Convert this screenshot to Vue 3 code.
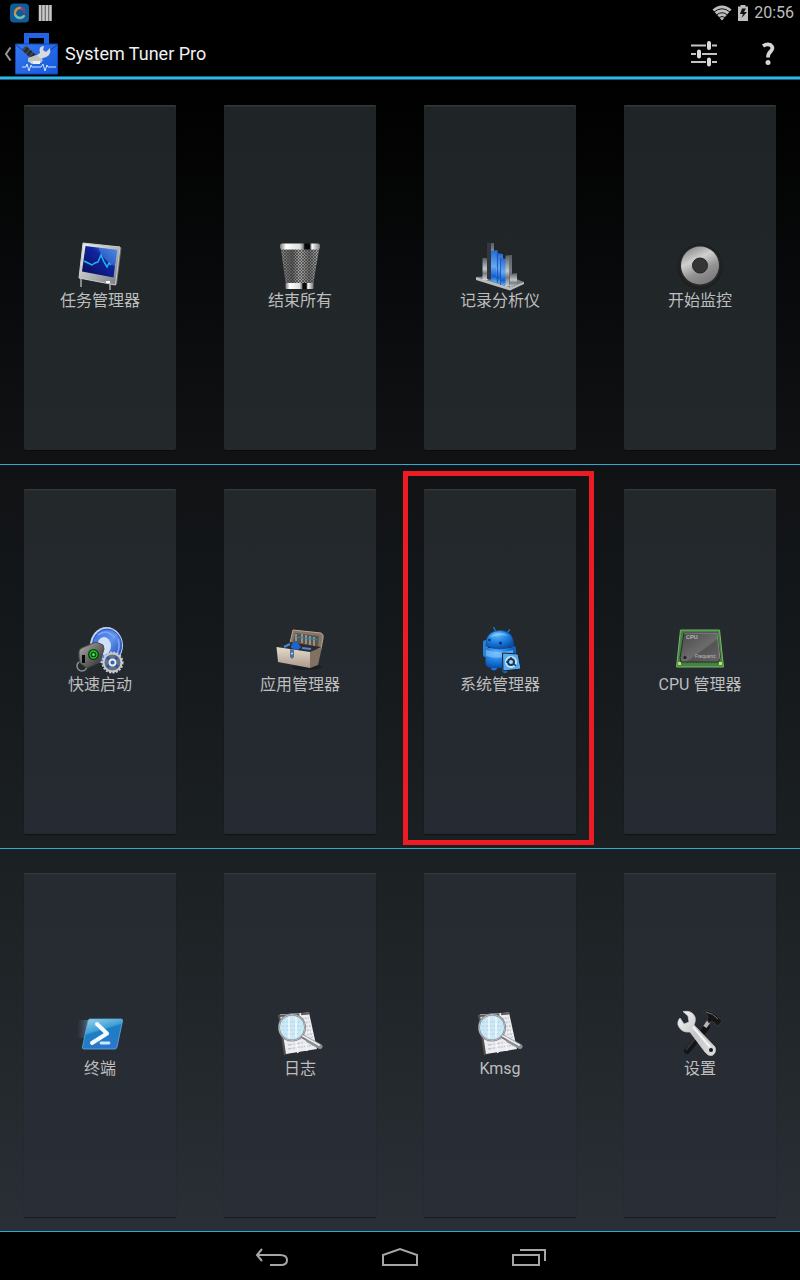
<script setup>
// rows of launcher tiles
const rows = [
  [
    { icon: 'monitor', label: '任务管理器' },
    { icon: 'trash', label: '结束所有' },
    { icon: 'chart', label: '记录分析仪' },
    { icon: 'record', label: '开始监控' }
  ],
  [
    { icon: 'launch', label: '快速启动' },
    { icon: 'toolbox', label: '应用管理器' },
    { icon: 'android', label: '系统管理器', marked: true },
    { icon: 'cpu', label: 'CPU 管理器' }
  ],
  [
    { icon: 'terminal', label: '终端' },
    { icon: 'log', label: '日志' },
    { icon: 'log', label: 'Kmsg' },
    { icon: 'tools', label: '设置' }
  ]
];
</script>

<template>
  <div class="screen">
    <!-- shared gradients for the icons -->
    <svg class="defs" aria-hidden="true">
      <defs>
        <linearGradient id="silver" x1="0" y1="0" x2="1" y2="1">
          <stop offset="0" stop-color="#f4f4f4" /><stop offset="1" stop-color="#777b7d" />
        </linearGradient>
        <linearGradient id="wrench" x1="0" y1="0" x2="1" y2="1">
          <stop offset="0" stop-color="#f8f8f8" /><stop offset="0.5" stop-color="#c4c6c7" />
          <stop offset="1" stop-color="#dcdcdc" />
        </linearGradient>
        <linearGradient id="chrome">
          <stop offset="0" stop-color="#777" /><stop offset="0.15" stop-color="#fff" />
          <stop offset="0.5" stop-color="#ddd" /><stop offset="0.58" stop-color="#888" />
          <stop offset="0.62" stop-color="#080808" /><stop offset="0.74" stop-color="#080808" />
          <stop offset="0.8" stop-color="#fff" /><stop offset="1" stop-color="#777" />
        </linearGradient>
        <linearGradient id="bin">
          <stop offset="0" stop-color="#8a8a8a" /><stop offset="0.3" stop-color="#5c5c5c" />
          <stop offset="0.5" stop-color="#a8a8a8" /><stop offset="0.75" stop-color="#6c6c6c" />
          <stop offset="1" stop-color="#aaa" />
        </linearGradient>
        <pattern id="mesh" width="3" height="3" patternUnits="userSpaceOnUse">
          <path d="M0 0L3 3M3 0L0 3" stroke="#333" stroke-width="0.6" />
        </pattern>
        <linearGradient id="lcd" x1="0" y1="1" x2="1" y2="0">
          <stop offset="0" stop-color="#080a55" /><stop offset="0.6" stop-color="#1024a0" />
          <stop offset="1" stop-color="#4a90e8" />
        </linearGradient>
        <linearGradient id="bar" x1="0" y1="0" x2="0" y2="1">
          <stop offset="0" stop-color="#2169d0" /><stop offset="0.5" stop-color="#68a8f4" />
          <stop offset="0.8" stop-color="#1260cc" /><stop offset="1" stop-color="#6eb4f0" />
        </linearGradient>
        <linearGradient id="steel" x1="0" y1="0" x2="0" y2="1">
          <stop offset="0" stop-color="#565c62" /><stop offset="0.5" stop-color="#c3c8cc" />
          <stop offset="0.7" stop-color="#777d82" /><stop offset="1" stop-color="#d5d8da" />
        </linearGradient>
        <linearGradient id="disc" x1="0.2" y1="0" x2="0.7" y2="1">
          <stop offset="0" stop-color="#858585" /><stop offset="0.35" stop-color="#d0d0d0" />
          <stop offset="0.65" stop-color="#939393" /><stop offset="1" stop-color="#777" />
        </linearGradient>
        <radialGradient id="droid" cx="0.4" cy="0.25" r="0.8">
          <stop offset="0" stop-color="#5db8ff" /><stop offset="0.5" stop-color="#1c7fe0" />
          <stop offset="1" stop-color="#0746a0" />
        </radialGradient>
        <linearGradient id="wheel" x1="0" y1="0" x2="1" y2="1">
          <stop offset="0" stop-color="#3b6be0" /><stop offset="0.5" stop-color="#5f94ec" />
          <stop offset="1" stop-color="#1434a4" />
        </linearGradient>
        <linearGradient id="fob" x1="0" y1="0" x2="1" y2="1">
          <stop offset="0" stop-color="#b2b2b0" /><stop offset="0.5" stop-color="#6b6c6a" />
          <stop offset="1" stop-color="#222" />
        </linearGradient>
        <linearGradient id="wood" x1="0" y1="0" x2="0" y2="1">
          <stop offset="0" stop-color="#e4dccf" /><stop offset="1" stop-color="#aa9a89" />
        </linearGradient>
        <linearGradient id="chip" x1="0" y1="0" x2="1" y2="1">
          <stop offset="0" stop-color="#484848" /><stop offset="0.55" stop-color="#6c6c6c" />
          <stop offset="0.6" stop-color="#545454" /><stop offset="1" stop-color="#666" />
        </linearGradient>
        <linearGradient id="shell" x1="0" y1="0" x2="0.4" y2="1">
          <stop offset="0" stop-color="#a2d8ee" /><stop offset="0.45" stop-color="#3f9fd4" />
          <stop offset="0.5" stop-color="#1c7fc4" /><stop offset="1" stop-color="#2b76cc" />
        </linearGradient>
        <linearGradient id="speed">
          <stop offset="0" stop-color="#67a" stop-opacity="0" /><stop offset="1" stop-color="#9cc4d8" />
        </linearGradient>
        <linearGradient id="bag" x1="0" y1="0" x2="1" y2="1">
          <stop offset="0" stop-color="#3578f2" /><stop offset="1" stop-color="#1658dc" />
        </linearGradient>
        <linearGradient id="swirl" x1="0" y1="0" x2="1" y2="1">
          <stop offset="0" stop-color="#f09a38" /><stop offset="0.5" stop-color="#9a4a90" />
          <stop offset="1" stop-color="#48d0c0" />
        </linearGradient>
      </defs>
    </svg>

    <div class="status-bar">
      <svg class="status-left" viewBox="0 0 44 20">
        <rect y="0.5" width="19" height="19" rx="4" fill="#0b5e99" />
        <path d="M13 6A5 5 0 1 0 14 13" fill="none" stroke="#e08a3c" stroke-width="2.500" stroke-linecap="round" />
        <path d="M11 4.500Q15 6 14 10" fill="none" stroke="#7a3f86" stroke-width="2.500" />
        <path d="M5 12Q8 17 14 13" fill="none" stroke="#55c9c8" stroke-width="2" />
        <path d="M29 2h12v16H29z" fill="#555" />
        <path d="M30 2v16M33.500 2v16M37 2v16M40.500 2v16" stroke="#c8c8c8" stroke-width="2.500" />
      </svg>
      <div class="status-right">
        <svg class="wifi" viewBox="0 0 20 16">
          <path d="M0.500 4.500Q10-3.500 19.500 4.500L10 15.500z" fill="#bebebe" />
          <path d="M2 7Q10 0.500 18 7M4.500 10Q10 5.500 15.500 10M7 12.500Q10 10.500 13 12.500" fill="none" stroke="#111" stroke-width="1" />
        </svg>
        <svg class="battery" viewBox="0 0 12 16">
          <path d="M1 1.500h2.500V0h5v1.500H11V16H1z" fill="#bebebe" />
          <path d="M5 3.500h4L7 7h3l-5.500 6L6 9H3z" fill="#111" />
        </svg>
        <span class="clock">20:56</span>
      </div>
    </div>

    <header class="action-bar">
      <button class="home-btn" aria-label="Navigate up">
        <svg class="caret" viewBox="0 0 8 14"><path d="M6.500 0.500L2 7L6.500 13.500" fill="none" stroke="#999" stroke-width="2" /></svg>
        <svg class="logo" viewBox="0 0 43 42">
          <path d="M9 0h25v11h-5V5H14v6H9z" fill="#2164e4" />
          <path d="M0.500 11h42v30h-42z" fill="url(#bag)" stroke="#1148b8" />
          <path d="M1 12L18 25H25L42 12" fill="none" stroke="#103e9c" />
          <path d="M9 15l12 11" stroke="#292c30" stroke-width="6" />
          <path d="M8 18l4-5M11 21l4-5M14 24l4-5" stroke="#777" stroke-width="0.600" />
          <path d="M13 28L25 20Q23 13 29 13L28 17L31 19L35 15Q37 23 28 25L17 31z" fill="#d8dadb" />
          <path d="M13 25l8-3 7 5-2 3h-8v-2l-5 1z" fill="#bfc2c4" />
          <path d="M18 28h7v3h-7z" fill="#eee" />
          <path d="M7 34H11L12 31L14 38L16 32L17 34H26L28 31L30 38L32 32L33 34H41" fill="none" stroke="#cfe3ff" stroke-width="1" />
        </svg>
      </button>
      <h1 class="title">System Tuner Pro</h1>
      <div class="actions">
        <button class="action-btn" aria-label="Tuning">
          <svg viewBox="0 0 28 28">
            <path d="M1 5.500h26M1 14h26M1 22h26" stroke="#c4c4c4" stroke-width="2" />
            <path d="M19 3v5M9 11.500v5M19 19.500v5" stroke="#050505" stroke-width="6" stroke-linecap="round" />
            <path d="M19 3v5M9 11.500v5M19 19.500v5" stroke="#dcdcdc" stroke-width="4" stroke-linecap="round" />
          </svg>
        </button>
        <button class="action-btn" aria-label="Help">
          <svg viewBox="0 0 28 28">
            <path d="M9 6Q13 3.500 16.500 5Q20 7.500 17 11Q14 13.500 14 17.500" fill="none" stroke="#d6d6d6" stroke-width="3.800" />
            <circle cx="14" cy="22.500" r="2.500" fill="#d6d6d6" />
          </svg>
        </button>
      </div>
    </header>

    <main class="grid">
      <div v-for="(row, r) in rows" :key="r" class="row">
        <div v-for="item in row" :key="item.label" class="cell" :class="{ marked: item.marked }">
          <button class="tile">
            <svg class="icon" viewBox="0 0 48 48">
              <g v-if="item.icon === 'monitor'">
                <path d="M5 37v8M34 41v7" stroke="#85898b" stroke-width="2" />
                <path d="M42 4L45.500 6L41 42L39 43z" fill="#686d70" />
                <path d="M7 1L44 5L39.500 43L3 36z" fill="url(#silver)" stroke="#c9cdd0" />
                <path d="M9.500 4L41 8L37.500 35.500L6 29.500z" fill="url(#lcd)" />
                <path d="M22 5.500L41 8L39 24Q28 20 22 5.500z" fill="#4b92ec" opacity="0.5" />
                <path d="M8 19L12 21L16 23L19 21L22 20L25 13L28 20L31 25L33 21L35 23" fill="none" stroke="#20b8e8" stroke-width="1.500" />
                <path d="M30 39h4v2h-4z" fill="#fff" />
              </g>
              <g v-else-if="item.icon === 'trash'">
                <path d="M5 7L10 43H37L43 7z" fill="url(#bin)" />
                <path d="M5 7L10 43H37L43 7z" fill="url(#mesh)" />
                <rect x="4" y="1.500" width="40" height="6" rx="2" fill="url(#chrome)" />
                <rect x="9.500" y="41" width="28" height="6" rx="1" fill="url(#chrome)" />
              </g>
              <g v-else-if="item.icon === 'chart'">
                <path d="M0 35L30 33L48 40L34 48z" fill="#777c80" />
                <path d="M0 35L34 45.500L48 40V42L34 48.500L0 38z" fill="#b9bdc0" />
                <path d="M6.500 16H12V38H6.500z" fill="url(#steel)" />
                <path d="M11 0.500L17 1V38L11 37z" fill="#32373f" />
                <path d="M15 1H18V38H15z" fill="url(#steel)" />
                <path d="M15 9L21.500 8V41L15 39z" fill="url(#bar)" />
                <path d="M20 11L27 12V42L20 41z" fill="url(#bar)" />
                <path d="M21.500 12V41M24.500 16V43" stroke="#1453ae" stroke-width="0.800" />
                <path d="M25 16L30 17V44L25 43z" fill="url(#bar)" />
                <path d="M29.500 13.500L36 13V43L29.500 45z" fill="url(#steel)" />
                <path d="M33 14H36V43H33z" fill="#5b6066" opacity="0.7" />
                <path d="M34 32L41 31V42L34 45z" fill="url(#steel)" />
              </g>
              <g v-else-if="item.icon === 'record'">
                <circle cx="24" cy="24.500" r="23" fill="#1e2021" />
                <circle cx="24" cy="24" r="20.500" fill="#292929" />
                <circle cx="24" cy="23.500" r="19" fill="url(#disc)" />
                <circle cx="24" cy="23.500" r="7.500" fill="#353535" stroke="#222" />
              </g>
              <g v-else-if="item.icon === 'launch'">
                <ellipse cx="30.500" cy="19.500" rx="16.500" ry="18.500" fill="#c4d4f3" />
                <ellipse cx="31" cy="19.500" rx="14.500" ry="16.500" fill="url(#wheel)" stroke="#2450c0" />
                <path d="M22 9Q31 2 39 12M36 33Q46 25 42 13" fill="none" stroke="#7fa4f0" stroke-width="1.500" />
                <ellipse cx="28" cy="20" rx="7" ry="9" fill="#cfe0f8" />
                <circle cx="6" cy="40" r="5" fill="none" stroke="#8c9090" stroke-width="1.500" />
                <path d="M3 25Q4 22 8 21L20 16L27 19L28 23L24 36L11 42L4 37L3 31z" fill="url(#fob)" stroke="#474847" />
                <path d="M6 29h3v8H6z" fill="#090909" />
                <circle cx="17.500" cy="28.500" r="5.500" fill="#173818" />
                <circle cx="17.500" cy="28.500" r="3.500" fill="#173818" stroke="#18cf22" stroke-width="1.300" />
                <circle cx="17.500" cy="28.500" r="1.500" fill="#36f044" />
                <circle cx="36.500" cy="36.500" r="9" fill="#687079" stroke="#c8cdd3" stroke-width="2" />
                <circle cx="36.500" cy="36.500" r="10.300" fill="none" stroke="#c8cdd3" stroke-width="1.500" stroke-dasharray="2 1.500" />
                <path d="M31 31l3 3M41 31l-2 3M31 41l3-2M42 41l-3-2" stroke="#2a55b0" stroke-width="3" />
                <circle cx="36.500" cy="36.500" r="3" fill="#3465bf" stroke="#e6ebef" stroke-width="1.800" />
              </g>
              <g v-else-if="item.icon === 'toolbox'">
                <ellipse cx="31" cy="41" rx="15" ry="3" fill="#15191d" opacity="0.6" />
                <path d="M17 4L45 7Q48 8 47 12L45 23L14 17z" fill="#857668" stroke="#b7a995" />
                <path d="M19 7L43 10L42 21L17 16z" fill="#5b544d" />
                <path d="M20 8V15M26 8V17M30 9V18M34 10V19M38 11V20" stroke="#b6b9b9" stroke-width="1.200" />
                <path d="M20 11L42 14" stroke="#268bb2" />
                <path d="M0.500 21L14 16L45 21L34 27z" fill="#302a28" />
                <path d="M15 22Q15 15 21 16L25 21L22 24z" fill="#1667d5" />
                <path d="M8 21L14 18M26 22L35 23" stroke="#4589dd" stroke-width="2" />
                <path d="M0.500 21L34 26V42L2 36z" fill="url(#wood)" />
                <path d="M34 26L46 21L42 39L34 42z" fill="#817163" />
                <path d="M14 23L18 24V31L16 33L14 31z" fill="#526e9b" />
                <circle cx="16" cy="27.500" r="1" fill="#c9d2df" />
              </g>
              <g v-else-if="item.icon === 'android'">
                <path d="M17.500 1L20 6M34 3.500L31 7" stroke="#2279c8" stroke-width="1.300" />
                <rect x="7" y="14" width="5" height="17" rx="2.500" fill="#2c83d2" />
                <rect x="35" y="20" width="5" height="14" rx="2.500" fill="#1660b8" />
                <path d="M15 38h6v5q-3 3-6 0zM26 38h6v7q-3 4-6 0z" fill="#1a75d0" />
                <path d="M9.500 22H37V38Q36 42 31 42H16Q10 42 9.500 37z" fill="url(#droid)" />
                <path d="M10 24Q23 28 37 24V29Q23 34 10 30z" fill="#8cc8fa" opacity="0.6" />
                <path d="M10 20Q9 5 24 4.500Q38 5 37.500 20Q24 26 10 20z" fill="url(#droid)" stroke="#0f4fa0" stroke-width="0.700" />
                <path d="M14 11Q22 3 33 10Q27 8 14 11z" fill="#a7dcff" opacity="0.5" />
                <circle cx="13.500" cy="14" r="1.300" fill="#083070" /><circle cx="24.500" cy="17" r="1.500" fill="#083070" />
                <path d="M26.500 27L42 28L45 43L27 45z" fill="#55abf2" stroke="#191f26" />
                <circle cx="35" cy="36" r="6" fill="#c4e2f9" />
                <circle cx="35" cy="36" r="3" fill="#acd4f4" stroke="#17395d" stroke-width="2" />
                <path d="M35 31v2M30 36h2M38 38l2 2" stroke="#17395d" stroke-width="1.500" />
              </g>
              <g v-else-if="item.icon === 'cpu'">
                <path d="M4.500 4H43.500L47.500 41H0.500z" fill="#44863f" stroke="#7ab36e" stroke-width="1" />
                <path d="M5 8H43M2 37H46" stroke="#316d2d" stroke-dasharray="1 2" />
                <path d="M8 6.500H41L44.500 32L42 36H5L4 32z" fill="url(#chip)" stroke="#292b2a" />
                <path d="M8 7L41 7L44 33" fill="none" stroke="#999" stroke-width="0.800" />
                <circle cx="9" cy="31.500" r="1.500" fill="#1c1c1c" />
                <path d="M2 36h3v3H2zM43 36h3v3h-3z" fill="#c9dd64" />
                <text x="10" y="13" class="chip-name">CPU</text>
                <text x="19" y="32" class="chip-sub">Frequenz</text>
              </g>
              <g v-else-if="item.icon === 'terminal'">
                <path d="M3 10H14L9 28H1z" fill="url(#speed)" opacity="0.5" />
                <path d="M14 9H45Q47 9 46.500 11L41 37Q40.500 39 39 39H8Q6 39 6.500 37L12 11Q12.500 9 14 9z" fill="url(#shell)" stroke="#57b0dd" stroke-width="0.800" />
                <path d="M21 14L31 23.500L16 33" fill="none" stroke="#f3fbff" stroke-width="4" stroke-linecap="round" stroke-linejoin="round" />
                <path d="M25 33H33" stroke="#c5e9ff" stroke-width="2.800" stroke-linecap="round" />
              </g>
              <g v-else-if="item.icon === 'log'">
                <path d="M2 5L6 4L12 44L8 45z" fill="#55504c" />
                <path d="M4 4.500L33 2.500L41 39L10 44z" fill="#ededf0" />
                <path d="M3 5L33 2.500V4.500L4 7z" fill="#5e5b58" />
                <path d="M8 11L33 8M9 15L34 12M9 19L35 16M10 23L35 20M10 27L36 24M11 31L37 27M12 35L37 31M12 39L38 35" stroke="#c3c5d8" stroke-width="1.300" stroke-dasharray="4 1 2 1" />
                <path d="M15 4L22 43M24 3L31 41" stroke="#f5f5f6" stroke-width="1.500" />
                <circle cx="16" cy="17.500" r="13" fill="#cbe9f7" stroke="#777f85" stroke-width="2" />
                <circle cx="16" cy="17.500" r="13" fill="none" stroke="#c8ced2" stroke-width="0.800" />
                <path d="M6 12h18M5 16h22M6 20h20M8 24h15" stroke="#b4d2e6" stroke-dasharray="3 1" />
                <path d="M13 7v21M20 7v20" stroke="#fff" stroke-width="2" opacity="0.6" />
                <path d="M26 26L34 31" stroke="#73787c" stroke-width="4" />
                <path d="M33 30.500L44 36.500" stroke="#8a8f92" stroke-width="5" stroke-linecap="round" />
                <path d="M27 26L43 35" stroke="#e8e9ea" stroke-width="2" stroke-linecap="round" />
              </g>
              <g v-else>
                <path d="M31 17L11 41" stroke="#141414" stroke-width="6" stroke-linecap="round" />
                <path d="M24 22L10 40" stroke="#373737" stroke-width="2" />
                <path d="M29 17L33 11" stroke="#b5b7b7" stroke-width="4" />
                <path d="M27 1Q37-1 43 8L46 11L42 16L36 11L33 13L31 10Q34 5 27 1z" fill="#151515" stroke="#3d3d3d" stroke-width="0.700" />
                <path d="M30 2Q37 3 42 9" fill="none" stroke="#777" />
                <path d="M7 1.500Q16 0 19 7Q20 11 18 15L39 37Q41 42 37 45Q33 47 29 42L14 22Q5 23 2 15Q1 11 4 8L8 14L13 12L12 6z" fill="url(#wrench)" stroke="#d5d5d5" stroke-width="0.700" />
                <path d="M17 17L34 37" stroke="#f5f5f5" stroke-width="2" />
                <circle cx="35" cy="40" r="2" fill="#171717" />
              </g>
            </svg>
            <span class="label">{{ item.label }}</span>
          </button>
        </div>
      </div>
    </main>

    <nav class="nav-bar">
      <button class="nav-btn" aria-label="Back">
        <svg viewBox="0 0 40 24"><path d="M10 3L5 9L10 15M5 9H28Q35 9 35 14Q35 19 29 19H18" /></svg>
      </button>
      <button class="nav-btn" aria-label="Home">
        <svg viewBox="0 0 40 24"><path d="M3 19V9L20 3L37 9V19z" /></svg>
      </button>
      <button class="nav-btn" aria-label="Recent apps">
        <svg viewBox="0 0 40 24"><path d="M5 9H31V19H5zM12 4H37V15" /></svg>
      </button>
    </nav>
  </div>
</template>

<style>
body {
  margin: 0;
  background: #000;
}
</style>

<style scoped>
.screen {
  display: flex;
  flex-direction: column;
  min-height: 100vh;
  background: linear-gradient(#000 80px, #101214 36%, #1b2023 67%, #23282c 83%, #2a2f37 96%);
  font-family: Roboto, "Noto Sans CJK SC", sans-serif;
  color: #bebebe;
}
.defs {
  position: absolute;
  width: 0;
  height: 0;
}
button {
  margin: 0;
  padding: 0;
  border: none;
  background: none;
  color: inherit;
  font: inherit;
  cursor: pointer;
}
svg {
  display: block;
}
.status-bar {
  display: flex;
  justify-content: space-between;
  align-items: center;
  height: 25px;
  padding: 0 6px 0 10px;
  background: #000;
}
.status-left {
  width: 44px;
  height: 20px;
}
.status-right {
  display: flex;
  align-items: center;
  gap: 5px;
}
.wifi {
  width: 20px;
  height: 16px;
}
.battery {
  width: 12px;
  height: 16px;
}
.clock {
  font-size: 16px;
  line-height: 24px;
}
.action-bar {
  display: flex;
  align-items: center;
  box-sizing: border-box;
  height: 55px;
  padding: 3px 18px 0 4px;
  border-bottom: 1px solid #176182;
  background: linear-gradient(to top, #33b5e5 2px, #176182 2px, #176182 3px, #000 3px);
}
.home-btn {
  display: flex;
  align-items: center;
  gap: 3px;
}
.caret {
  width: 8px;
  height: 14px;
}
.logo {
  width: 43px;
  height: 42px;
}
.title {
  flex: 1;
  margin: 0 0 0 7px;
  font-size: 18px;
  line-height: 24px;
  font-weight: 400;
  color: #f0f0f0;
}
.actions {
  display: flex;
  gap: 36px;
}
.action-btn svg {
  width: 28px;
  height: 28px;
}
.grid {
  flex: 1;
  display: grid;
  /* the last row is slightly shorter than the others */
  grid-template-rows: 384fr 384fr 383fr;
  padding-top: 1px;
}
.row {
  display: grid;
  grid-template-columns: repeat(4, 1fr);
  border-bottom: 1px solid #2fa9d6;
}
.cell {
  position: relative;
  display: flex;
  padding: 24px 24px 14px;
}
.tile {
  flex: 1;
  display: flex;
  flex-direction: column;
  align-items: center;
  justify-content: center;
  padding-bottom: 1px;
  border-radius: 2px;
  background: linear-gradient(#1f2427, #23282b);
  box-shadow: inset 0 1px #34383a, inset 0 2px #2a2e30, 0 1px 1px rgba(0, 0, 0, 0.4);
}
.row:nth-child(2) .tile {
  background: linear-gradient(#23282b, #262b33);
}
.row:nth-child(3) .tile {
  background: linear-gradient(#262b32, #292e36);
}
.icon {
  width: 48px;
  height: 48px;
  overflow: visible;
}
.label {
  font-size: 16px;
  line-height: 22px;
}
.chip-name {
  font-size: 6px;
  fill: #ddd;
}
.chip-sub {
  font-size: 5px;
  fill: #bbb;
}
/* highlight frame around the marked tile */
.marked::after {
  content: '';
  position: absolute;
  inset: 6px 6px 3px 3px;
  border: 5px solid #ed1c24;
  pointer-events: none;
}
.nav-bar {
  display: flex;
  justify-content: center;
  box-sizing: border-box;
  height: 48px;
  padding-top: 3px;
  background: #000;
}
.nav-btn {
  display: flex;
  justify-content: center;
  align-items: center;
  width: 128px;
}
.nav-btn svg {
  width: 40px;
  height: 24px;
  fill: none;
  stroke: #a6a6a6;
  stroke-width: 2;
}
</style>
